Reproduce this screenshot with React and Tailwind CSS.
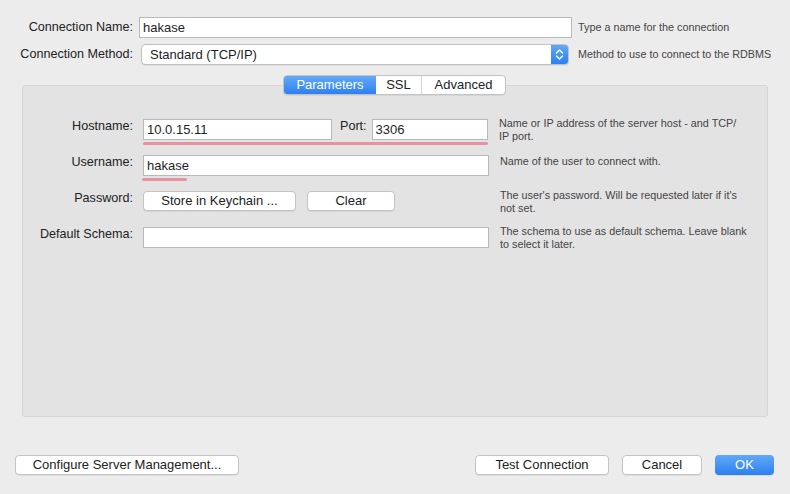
import React from "react";

const font = { fontFamily: '"Liberation Sans", Arial, sans-serif' };

function Field({ w, value, className = "" }) {
  return (
    <div
      className={`h-[21px] bg-white border border-[#b9b9b9] flex items-center px-[3px] text-[13px] text-[#1e1e1e] ${w} ${className}`}
    >
      {value}
    </div>
  );
}

function Btn({ children, w, className = "" }) {
  return (
    <div
      className={`h-[20px] bg-white border border-[#c3c3c3] rounded-[4px] shadow-[0_1px_0_rgba(0,0,0,0.06)] flex items-center justify-center text-[13px] text-[#222] ${w} ${className}`}
    >
      {children}
    </div>
  );
}

function Help({ children, className = "" }) {
  return (
    <div className={`text-[10.8px] leading-[13px] text-[#444] ${className}`}>{children}</div>
  );
}

export default function App() {
  return (
    <div style={font} className="w-[790px] h-[494px] bg-[#ececec] flex flex-col overflow-hidden">
      {/* Connection Name */}
      <div className="flex items-center mt-[17px] h-[21px]">
        <div className="w-[133px] text-right text-[12.6px] text-[#222]">Connection Name:</div>
        <Field w="w-[433px]" value="hakase" className="ml-[6px]" />
        <Help className="ml-[6px]">Type a name for the connection</Help>
      </div>
      {/* Connection Method */}
      <div className="flex items-center mt-[6px] h-[21px]">
        <div className="w-[133px] text-right text-[12.6px] text-[#222]">Connection Method:</div>
        <div className="ml-[8px] w-[428px] h-[21px] bg-white border border-[#c0c0c0] rounded-[4px] flex items-center overflow-hidden shadow-[0_1px_0_rgba(0,0,0,0.06)]">
          <div className="flex-1 pl-[8px] text-[13px] text-[#1e1e1e]">Standard (TCP/IP)</div>
          <div className="w-[17px] h-full bg-gradient-to-b from-[#62a8f8] to-[#2b7ff0] flex items-center justify-center">
            <svg width="9" height="13" viewBox="0 0 9 13" fill="none" stroke="white" strokeWidth="1.4" strokeLinecap="round" strokeLinejoin="round">
              <path d="M1.5 5 L4.5 2 L7.5 5" />
              <path d="M1.5 8 L4.5 11 L7.5 8" />
            </svg>
          </div>
        </div>
        <Help className="ml-[9px]">Method to use to connect to the RDBMS</Help>
      </div>

      {/* Panel */}
      <div className="mt-[20px] ml-[22px] w-[746px] h-[332px] bg-[#e3e3e3] border border-[#d6d6d6] rounded-[3px] flex flex-col">
        <div className="-mt-[11px] flex justify-center">
          <div className="ml-[-1px] flex h-[20px] rounded-[4px] border border-[#c3c3c3] bg-white overflow-hidden text-[13px] shadow-[0_1px_0_rgba(0,0,0,0.06)]">
            <div className="w-[92px] bg-gradient-to-b from-[#63a9f8] to-[#2d80f0] text-white flex items-center justify-center">Parameters</div>
            <div className="w-[46px] text-[#222] flex items-center justify-center border-r border-[#d6d6d6]">SSL</div>
            <div className="w-[83px] text-[#222] flex items-center justify-center">Advanced</div>
          </div>
        </div>

        {/* Hostname row */}
        <div className="flex items-start mt-[24px]">
          <div className="w-[110px] text-right text-[12.6px] text-[#222] leading-[16px] mt-[-1px]">Hostname:</div>
          <div className="ml-[10px] flex flex-col">
            <div className="flex items-start">
              <Field w="w-[189px]" value="10.0.15.11" />
              <div className="ml-[8px] text-[12.6px] text-[#222] leading-[16px] mt-[-1px]">Port:</div>
              <Field w="w-[116px]" value="3306" className="ml-[5px]" />
            </div>
            <div className="mt-[2px] h-[3px] w-[345px] rounded-full bg-[#e8919f]" />
          </div>
          <Help className="ml-[11px] mt-[-2px]">
            Name or IP address of the server host - and TCP/
            <br />
            IP port.
          </Help>
        </div>

        {/* Username row */}
        <div className="flex items-start mt-[10px]">
          <div className="w-[110px] text-right text-[12.6px] text-[#222] leading-[16px] mt-[-1px]">Username:</div>
          <div className="ml-[10px] flex flex-col">
            <Field w="w-[346px]" value="hakase" />
            <div className="mt-[2px] h-[3px] w-[45px] -ml-[1px] rounded-full bg-[#e8919f]" />
          </div>
          <Help className="ml-[11px]">Name of the user to connect with.</Help>
        </div>

        {/* Password row */}
        <div className="flex items-start mt-[10px]">
          <div className="w-[110px] text-right text-[12.6px] text-[#222] leading-[16px] -mt-[1px]">Password:</div>
          <Btn w="w-[153px]" className="ml-[10px]">Store in Keychain ...</Btn>
          <Btn w="w-[88px]" className="ml-[11px]">Clear</Btn>
          <Help className="ml-[105px] mt-[-2px]">
            The user's password. Will be requested later if it's
            <br />
            not set.
          </Help>
        </div>

        {/* Default Schema row */}
        <div className="flex items-start mt-[12px]">
          <div className="w-[110px] text-right text-[12.6px] text-[#222] leading-[16px] mt-[-1px]">Default Schema:</div>
          <Field w="w-[346px]" value="" className="ml-[10px]" />
          <Help className="ml-[11px] mt-[-2px]">
            The schema to use as default schema. Leave blank
            <br />
            to select it later.
          </Help>
        </div>
      </div>

      {/* Bottom buttons */}
      <div className="flex items-center mt-[38px] h-[20px]">
        <Btn w="w-[224px]" className="ml-[15px]">Configure Server Management...</Btn>
        <Btn w="w-[134px]" className="ml-[236px]">Test Connection</Btn>
        <Btn w="w-[80px]" className="ml-[13px]">Cancel</Btn>
        <div className="ml-[13px] w-[59px] h-[20px] rounded-[4px] bg-gradient-to-b from-[#62a8f8] to-[#2b7ff0] text-white text-[13px] flex items-center justify-center shadow-[0_1px_0_rgba(0,0,0,0.08)]">
          OK
        </div>
      </div>
    </div>
  );
}
